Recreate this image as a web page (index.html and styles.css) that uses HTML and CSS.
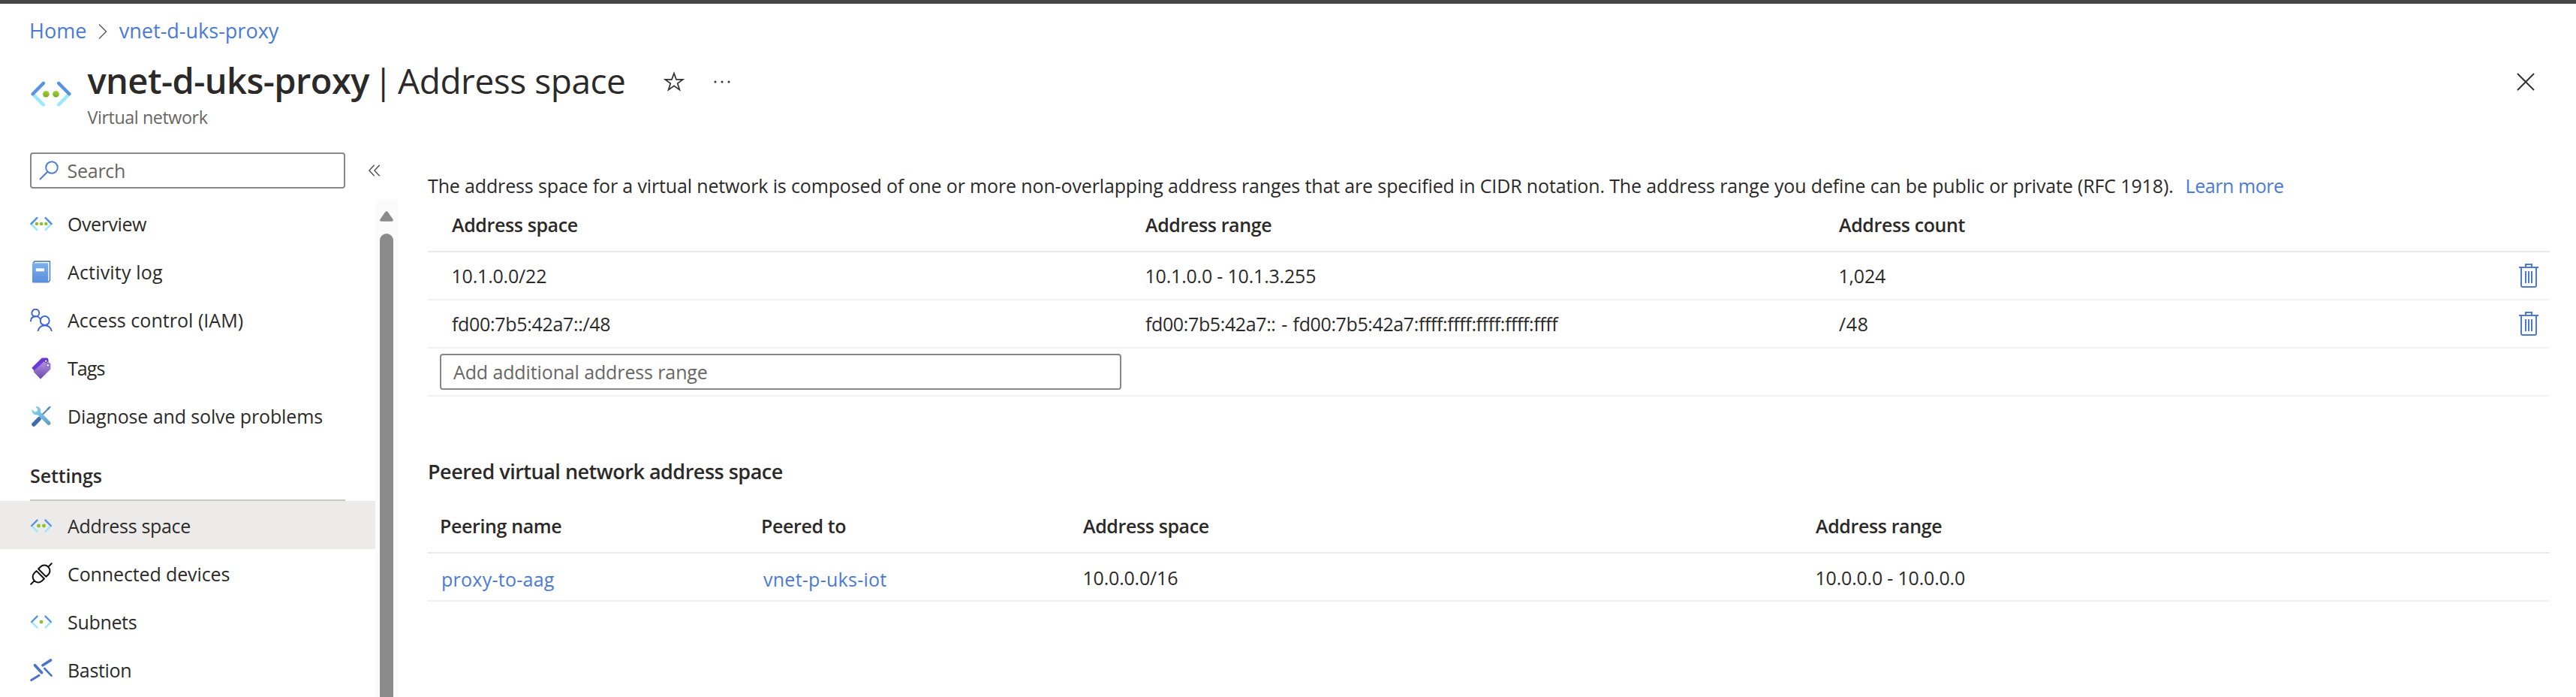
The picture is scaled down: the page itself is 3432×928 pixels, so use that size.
FILE: index.html
```html
<!DOCTYPE html>
<html lang="en">
<head>
<meta charset="utf-8">
<title>vnet-d-uks-proxy | Address space</title>
<link rel="stylesheet" href="styles.css">
</head>
<body>
<svg class="defs" width="0" height="0" aria-hidden="true">
  <defs>
    <linearGradient id="book" x1="0" y1="0" x2="0" y2="1"><stop offset="0" stop-color="#7db0f0"/><stop offset="1" stop-color="#5a8ddd"/></linearGradient>
    <linearGradient id="tag" x1="0" y1="0" x2="0" y2="1"><stop offset="0" stop-color="#b494e4"/><stop offset="1" stop-color="#6a48ae"/></linearGradient>
    <linearGradient id="wrench" x1="0" y1="0" x2="1" y2="1"><stop offset="0" stop-color="#86d8f6"/><stop offset="1" stop-color="#5f9cc4"/></linearGradient>
    <linearGradient id="dot" x1="0" y1="0" x2="0" y2="1"><stop offset="0" stop-color="#a0d03a"/><stop offset="1" stop-color="#7dab26"/></linearGradient>
    <symbol id="brackets" viewBox="0 0 54 34">
      <g fill="none" stroke-width="4.6" stroke-linecap="round">
        <path stroke="#9ce8fd" d="M3.5 18l13.2 13.4M50.5 18l-13.2 13.4"/>
        <path stroke="#5a92e2" d="M16.7 3L2.8 17M37.3 3l13.9 14"/>
      </g>
    </symbol>
    <symbol id="trash" viewBox="0 0 26 32">
      <g fill="none" stroke="#4a7ad2" stroke-width="2">
        <path d="M0 5h26M9 4V1h8v3M3 6v23q0 2 2 2h16q2 0 2-2V6M9 10v16M13 10v16M17 10v16"/>
      </g>
    </symbol>
  </defs>
</svg>

<div class="topbar"></div>
<nav class="crumbs">
  <a class="crumb">Home</a>
  <svg class="crumb-sep" width="12" height="22" viewBox="0 0 12 22"><path d="M1 1.500l9.500 9.500L1 20.500" fill="none" stroke="#605e5c" stroke-width="1.500"/></svg>
  <a class="crumb">vnet-d-uks-proxy</a>
</nav>

<header class="header">
  <svg class="header-icon" width="54" height="34" viewBox="0 0 54 34"><use href="#brackets"/><circle cx="20.300" cy="17.200" r="4.300" fill="url(#dot)"/><circle cx="33.500" cy="17.200" r="4.300" fill="url(#dot)"/></svg>
  <div class="heading">
    <div class="title-row">
      <h1 class="title"><span class="title-name">vnet-d-uks-proxy</span><span class="title-bar">|</span><span class="title-page">Address space</span></h1>
      <svg class="star" width="28" height="28" viewBox="0 0 28 28"><path d="M14 2.600l3 8.300h8.700l-7 5.200 2.700 8.600-7.400-5.300-7.400 5.300 2.700-8.600-7-5.200H11z" fill="none" stroke="#323130" stroke-width="1.700"/></svg>
      <svg class="dots" width="22" height="4" viewBox="0 0 22 4"><g fill="#323130"><circle cx="2" cy="2" r="1.500"/><circle cx="11" cy="2" r="1.500"/><circle cx="20" cy="2" r="1.500"/></g></svg>
      <svg class="close" width="24" height="24" viewBox="0 0 24 24"><path d="M1 1l22 22M23 1L1 23" stroke="#323130" stroke-width="2"/></svg>
    </div>
    <div class="subtitle">Virtual network</div>
  </div>
</header>

<div class="layout">
  <aside class="sidebar">
    <div class="search-row">
      <div class="search">
        <svg width="26" height="26" viewBox="0 0 26 26"><g fill="none" stroke="#4a7ad2" stroke-width="1.900"><circle cx="17" cy="9" r="7.800"/><path d="M11.500 14.500L1 25"/></g></svg>
        <span class="search-text">Search</span>
      </div>
      <svg class="collapse" width="16" height="16" viewBox="0 0 16 16"><path d="M7.700 .8L.9 8l6.800 7.200M14.700 .8L7.900 8l6.800 7.200" fill="none" stroke="#484644" stroke-width="1.300"/></svg>
    </div>
    <div class="menu-wrap">
      <div class="menu">
        <div class="item">
          <svg width="30" height="20" viewBox="0 0 30 20"><use href="#brackets" width="30" height="20"/><g fill="#8cc02c"><circle cx="8.900" cy="10" r="2.200"/><circle cx="15.100" cy="10" r="2.200"/><circle cx="21.300" cy="10" r="2.200"/></g></svg>
          <span class="ls-4">Overview</span>
        </div>
        <div class="item">
          <svg width="30" height="30" viewBox="0 0 30 30"><path d="M4 3.500L6 1h20.500v25.500L24 29" fill="#fff" stroke="#3f6cb4" stroke-width="1.300"/><rect x="3" y="3.300" width="21.300" height="26.200" rx="1.200" fill="url(#book)"/><rect x="7.800" y="10.300" width="11.200" height="4" fill="#fff"/></svg>
          <span class="ls-plus">Activity log</span>
        </div>
        <div class="item">
          <svg width="30" height="30" viewBox="0 0 30 30"><g fill="none" stroke="#3c62dc" stroke-width="1.900"><circle cx="7.300" cy="5.700" r="4.900"/><path d="M.9 17.300c0-8.600 10-9.300 13-3"/><circle cx="19.700" cy="16" r="6"/><path d="M10.400 30.500c1.500-11 17-11 18.600 0"/></g></svg>
          <span class="ls-0">Access control (IAM)</span>
        </div>
        <div class="item">
          <svg width="30" height="30" viewBox="0 0 30 30"><path d="M2.300 14.800L15 2.300q.7-.7 1.700-.7h5.500q2 0 2.200 2l.6 5L6 19.500z" fill="#6a38d8"/><path d="M5.200 18.600L19 5.900h5l3.500 3.200v6.200q0 .9-.6 1.600L14 29.800 5.200 20.600z" fill="url(#tag)"/><circle cx="21.200" cy="5.700" r="1.800" fill="#fff" stroke="#3e1a90"/><circle cx="23.900" cy="11.300" r="2" fill="#fff" stroke="#6c4cb0"/></svg>
          <span class="ls-9">Tags</span>
        </div>
        <div class="item">
          <svg width="30" height="30" viewBox="0 0 30 30"><path d="M26.500 3L16 13.500" stroke="#5288b8" stroke-width="2.200" stroke-linecap="round"/><path d="M26.800 2.400l-3.600 2.400 1.500 1.500z" fill="#5288b8" stroke="#5288b8"/><path d="M16 14l-4.500 5" stroke="#4c80b8" stroke-width="2.500"/><path d="M5 26L12 18.800" stroke="#3f6bb0" stroke-width="5.500" stroke-linecap="round"/><path d="M7.300 2.300q4-1.200 6.300 2.500 1 2.300.4 5L27 22.700q1.300 1.700 0 3.500-1.800 1.500-3.600.2L10.300 13.400q-4.800.7-7-2.600Q1.800 8.300 2.500 6l4 3.600 3-.8.600-2.900z" fill="url(#wrench)"/></svg>
          <span>Diagnose and solve problems</span>
        </div>
        <div class="section"><span>Settings</span></div>
        <div class="item selected">
          <svg width="30" height="18" viewBox="0 0 30 18"><use href="#brackets" width="30" height="18"/><g fill="#8cc02c"><circle cx="11.500" cy="9" r="2.400"/><circle cx="18.500" cy="9" r="2.400"/></g></svg>
          <span class="ls-3">Address space</span>
        </div>
        <div class="item">
          <svg width="30" height="30" viewBox="0 0 30 30"><g transform="translate(15 15) rotate(-45)" fill="none" stroke="#111" stroke-width="2" stroke-linecap="round" stroke-linejoin="round"><path d="M-1.800-7.300h-4a7.300 7.300 0 0 0 0 14.600h4zM1.800-7.300h4a7.300 7.300 0 0 1 0 14.600h-4zM-13.200 0h-6.300M13.200 0h6.300"/></g></svg>
          <span>Connected devices</span>
        </div>
        <div class="item">
          <svg width="30" height="18" viewBox="0 0 30 18"><use href="#brackets" width="30" height="18"/><circle cx="15" cy="9" r="2.400" fill="#8cc02c"/></svg>
          <span class="ls-3">Subnets</span>
        </div>
        <div class="item">
          <svg width="30" height="30" viewBox="0 0 30 30"><g stroke="#4675cb" stroke-linecap="round"><path stroke-width="3.600" d="M27.500 2L17 8.800"/><path stroke-width="3.800" d="M6.500 8.800l9 9.700"/><path stroke-width="2.600" d="M19.300 13l9.200 9.700"/><path stroke-width="3" d="M1.800 28.600l10.200-6.400"/></g></svg>
          <span class="ls-3">Bastion</span>
        </div>
      </div>
      <div class="track">
        <svg width="18" height="14" viewBox="0 0 18 14"><path d="M7.400 1q1.600-1.700 3.200 0l6.800 9.800q1.200 2.700-1.300 3H1.900q-2.500-.3-1.300-3z" fill="#8b8b8b"/></svg>
        <div class="thumb"></div>
      </div>
    </div>
  </aside>

  <main class="main">
    <p class="intro"><span>The address space for a virtual network is composed of one or more non-overlapping address ranges that are specified in CIDR notation. The address range you define can be public or private (RFC 1918).</span><a class="link ls-4">Learn more</a></p>

    <div class="table space">
      <div class="row head"><span>Address space</span><span>Address range</span><span>Address count</span></div>
      <div class="row"><span class="digits">10.1.0.0/22</span><span class="digits">10.1.0.0 - 10.1.3.255</span><span class="digits">1,024</span><svg width="26" height="32"><use href="#trash"/></svg></div>
      <div class="row"><span class="ls-3">fd00:7b5:42a7::/48</span><span class="range6">fd00:7b5:42a7:: - fd00:7b5:42a7:ffff:ffff:ffff:ffff:ffff</span><span class="ls-p6">/48</span><svg width="26" height="32"><use href="#trash"/></svg></div>
      <div class="row entry"><div class="input">Add additional address range</div></div>
    </div>

    <h2 class="peered-title">Peered virtual network address space</h2>
    <div class="table peered">
      <div class="row head"><span>Peering name</span><span>Peered to</span><span>Address space</span><span>Address range</span></div>
      <div class="row"><a class="link">proxy-to-aag</a><a class="link to">vnet-p-uks-iot</a><span class="digits">10.0.0.0/16</span><span class="digits">10.0.0.0 - 10.0.0.0</span></div>
    </div>
  </main>
</div>
</body>
</html>
```
FILE: styles.css
```css
* { box-sizing: border-box; }
html, body { height: 100%; }
body {
  margin: 0;
  overflow: hidden;
  display: flex;
  flex-direction: column;
  background: #fff;
  color: #2b2a29;
  font: 400 25px/34px "Open Sans", "Noto Sans", sans-serif;
  letter-spacing: -0.12px;
  white-space: nowrap;
}
svg { display: block; flex: none; }
h1, h2, p { margin: 0; font-weight: 400; }
.defs { position: absolute; }
.link, .crumb { color: #4a7ad6; }

.ls-0 { letter-spacing: 0.03px; }
.ls-3 { letter-spacing: -0.32px; }
.ls-4 { letter-spacing: -0.43px; }
.ls-9 { letter-spacing: -0.9px; }
.ls-plus { letter-spacing: 0.17px; }
.ls-p6 { letter-spacing: 0.6px; }
.digits { letter-spacing: -0.2px; text-indent: -0.5px; }
.range6 { letter-spacing: -0.38px; word-spacing: 1.6px; }

.topbar { height: 5px; background: #484644; flex: none; }
.crumbs {
  flex: none;
  display: flex;
  align-items: center;
  height: 70px;
  padding: 2px 0 0 39px;
  font-size: 27px;
  letter-spacing: 0;
}
.crumb-sep { margin: 2px 15.500px 0 16px; }

.header { flex: none; display: flex; align-items: center; height: 98px; padding-left: 41px; }
.header-icon { margin-top: 1px; }
.heading { flex: 1; padding-left: 21.500px; }
.title-row { display: flex; align-items: center; height: 64px; padding-right: 55px; }
.title { display: flex; align-items: baseline; line-height: 64px; font-size: 46px; }
.title-name { font-size: 47px; font-weight: 600; letter-spacing: -0.55px; }
.title-bar { margin: 0 7px 0 6px; }
.title-page { letter-spacing: -0.45px; }
.star { margin: 4px 0 0 50px; }
.dots { margin: 4px 0 0 39px; }
.close { margin: 4px 0 0 auto; }
.subtitle { font-size: 23.300px; letter-spacing: -0.42px; color: #686664; }

.layout { flex: 1; min-height: 0; display: flex; }
.sidebar { width: 530px; flex: none; display: flex; flex-direction: column; }
.search-row { flex: none; display: flex; align-items: center; height: 92px; padding: 30px 0 14px 40px; }
.search {
  display: flex;
  align-items: center;
  width: 420px;
  height: 48px;
  padding-left: 9.500px;
  border: 2px solid #8a8886;
  border-radius: 4px;
  color: #686664;
}
.search-text { margin-left: 12px; letter-spacing: -0.25px; }
.collapse { margin-left: 30.500px; }
.menu-wrap { flex: 1; min-height: 0; display: flex; }
.menu { width: 500px; overflow: hidden; }
.item { display: flex; align-items: center; height: 64px; padding: 2px 0 0 40px; gap: 20px; }
.item span { margin-top: -1px; }
.item.selected { background: #edebe9; }
.section { height: 82px; padding: 31px 40px 0; font-weight: 600; }
.section span { display: block; height: 51px; border-bottom: 2px solid #c8c8c6; }
.track { width: 30px; padding: 16px 6px 0; background: #fbfbfb; display: flex; flex-direction: column; gap: 16px; }
.thumb { flex: 1; background: #8b8b8b; border-radius: 9px 9px 0 0; }

.main { flex: 1; min-width: 0; padding: 57px 35px 0 40px; }
.intro { display: flex; letter-spacing: -0.142px; }
.intro .link { margin-left: 16px; }

.row { display: grid; align-items: center; height: 64px; border-bottom: 2px solid #f1f1f1; }
.row.head { align-items: end; font-weight: 600; letter-spacing: -0.38px; border-bottom-color: #e9e9e9; }
.space .row { grid-template-columns: 924px 924px 1fr auto; padding: 0 15px 0 32px; }
.space .row > span { margin-top: -1px; }
.space .head { height: 72px; padding-bottom: 18px; }
.space .row.entry { grid-template-columns: 908px; padding-left: 16px; }
.input {
  height: 48px;
  padding-left: 16px;
  border: 2px solid #8a8886;
  border-radius: 4px;
  line-height: 44px;
  color: #686664;
}

.peered-title { margin: 83px 0 37px; font-size: 27px; font-weight: 600; letter-spacing: -0.5px; }
.peered .row { grid-template-columns: 428px 429px 976px 1fr; padding: 2px 0 0 16px; }
.peered .head { height: 55px; padding: 0 0 18px 16px; }
.peered .link { padding: 3px 0 0 2px; letter-spacing: 0.26px; }
.peered .link.to { padding-left: 3px; }
```
